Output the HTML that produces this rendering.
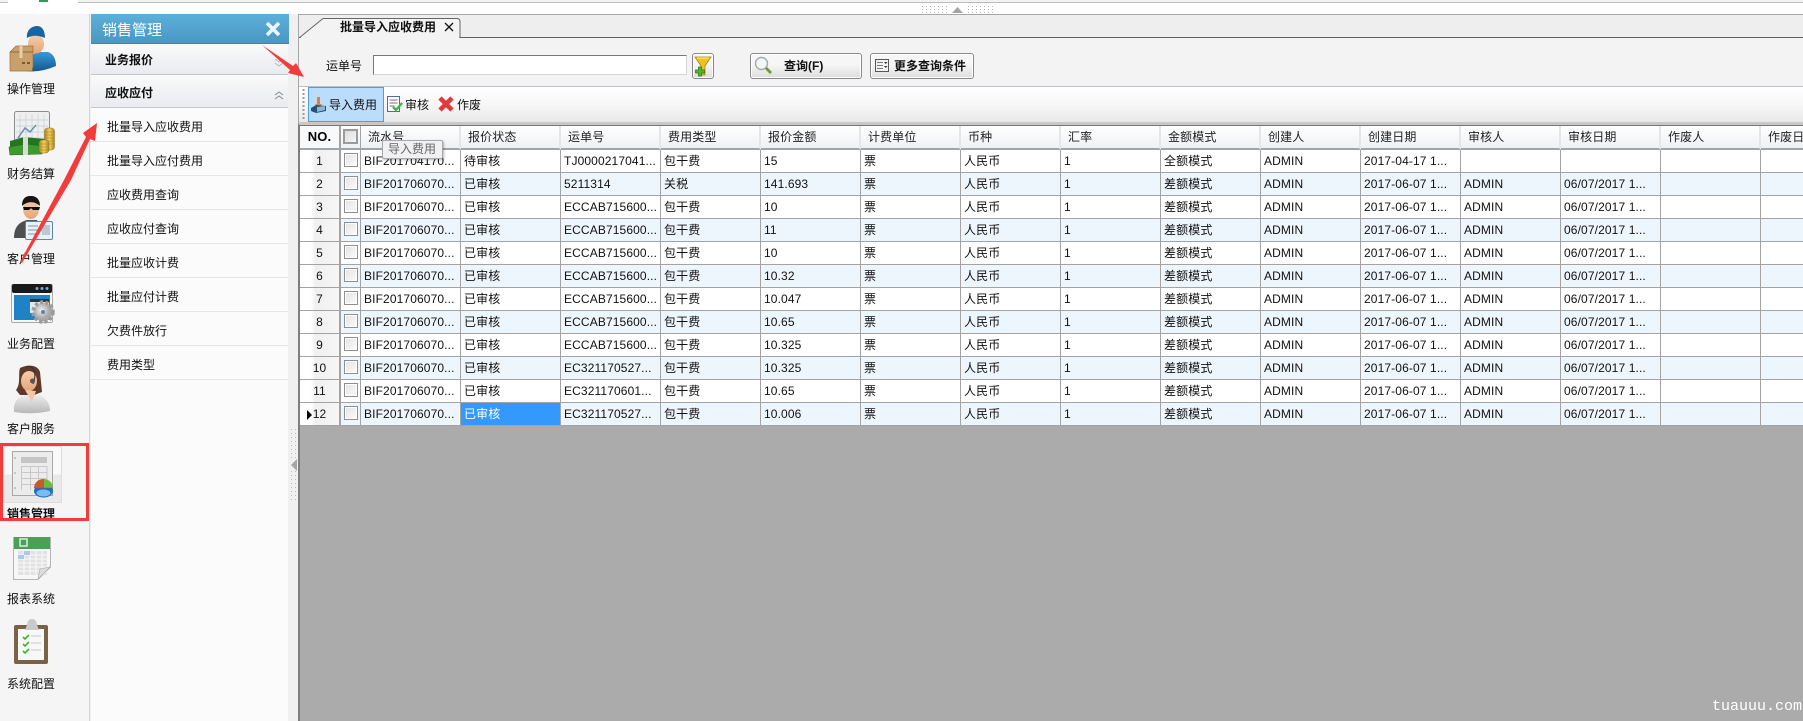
<!DOCTYPE html>
<html lang="zh-CN"><head><meta charset="utf-8"><title>销售管理</title>
<style>
*{box-sizing:border-box}
html,body{margin:0;padding:0;width:1803px;height:721px;overflow:hidden;background:#fff}
body{position:relative;font:12px/14px "Liberation Sans","Noto Sans CJK SC",sans-serif;color:#111}
.a{position:absolute;white-space:nowrap}
.lbl{position:absolute;left:7px;width:60px;line-height:16px;color:#111}
.mi{position:absolute;left:91px;width:197px;height:34px;border-bottom:1px solid #e6e6e6;padding:12px 0 0 16px;line-height:15px;background:#fbfbfb}
.acc{position:absolute;left:91px;width:197px;background:linear-gradient(#fafafa,#e9ebf0);border-bottom:1px solid #c3c7cf;font-weight:bold;padding-left:14px}
table{position:absolute;left:300px;top:126px;border-collapse:separate;border-spacing:0;table-layout:fixed;width:1561px;background:#fff}
td,th{height:23px;padding:0 0 0 3px;border-right:1px solid #a3a3a3;border-bottom:1px solid #a3a3a3;overflow:hidden;white-space:nowrap;font-weight:normal;text-align:left;font-size:12px;letter-spacing:.12px;color:#111}
th{height:24px;padding-left:7px;background:linear-gradient(#fff,#eef1f4);color:#222;border-bottom:2px solid #a3a3a3;border-right:2px solid #e4e6ea}
th:first-child{padding:0;text-align:center;font-weight:bold;font-size:13px;color:#000;background:#f8f9fa;border-right:2px solid #a3a3a3}
td:first-child{padding:0;text-align:center;background:linear-gradient(90deg,#fff 28%,#f0f0f0 40%,#f6f6f6 100%);border-right:2px solid #a3a3a3}
th:nth-child(2){padding:0;border-right:1px solid #a3a3a3}
td:nth-child(2){padding:0 0 0 3px;border-right:1px solid #a3a3a3}
tr:nth-child(even) td:not(:first-child){background:#eef6fd}
tr:nth-child(odd) td:not(:first-child){background:#fff}
.cb{display:block;width:14px;height:14px;margin-top:-2px;background:linear-gradient(135deg,#e3e3e3,#fbfbfb);border:1px solid #8f8f8f;box-shadow:inset 0 0 0 1px #fff}
.cbh{display:block;width:15px;height:15px;margin:-1px 0 0 2px;background:linear-gradient(135deg,#ddd,#f4f4f4);border:2px solid #9b9b9b}
td.sel{background:#3399ff!important;color:#fff}
.btn{position:absolute;top:53px;height:26px;border:1px solid #8a8a8a;border-radius:3px;background:linear-gradient(#f6f6f6 45%,#dcdcdc);box-shadow:inset 0 0 0 1px #fff}
.soft{filter:blur(.35px)}
</style></head><body>

<!-- top strip -->
<div class="a" style="left:0;top:0;width:1803px;height:3px;background:#f2f2f2;border-bottom:1px solid #bcbcbc"></div>
<div class="a" style="left:8px;top:0;width:70px;height:3px;background:#fff"></div>
<div class="a" style="left:39px;top:0;width:9px;height:2px;background:#2f9a55"></div>

<!-- icon column -->
<div class="a" style="left:0;top:14px;width:90px;height:707px;background:#f5f5f5;border-right:1px solid #d6d6d6"></div>
<div class="a" style="left:90px;top:14px;width:208px;height:707px;background:#f0f0f0"></div>
<div class="a" style="left:3px;top:446px;width:59px;height:57px;background:linear-gradient(#f9f9f9 50%,#e9e9e9 50%);border:1px solid #ddd"></div>

<svg class="a soft" style="left:0;top:0" width="90" height="721" viewBox="0 0 90 721">
<defs>
<linearGradient id="bl" x1="0" y1="0" x2="0" y2="1"><stop offset="0" stop-color="#3a9ad8"/><stop offset="1" stop-color="#14578f"/></linearGradient>
<linearGradient id="gd" x1="0" y1="0" x2="1" y2="0"><stop offset="0" stop-color="#a8852a"/><stop offset=".5" stop-color="#f4d35a"/><stop offset="1" stop-color="#a8852a"/></linearGradient>
<linearGradient id="sk" x1="0" y1="0" x2="0" y2="1"><stop offset="0" stop-color="#f7cdaa"/><stop offset="1" stop-color="#e5a67a"/></linearGradient>
<linearGradient id="wh" x1="0" y1="0" x2="0" y2="1"><stop offset="0" stop-color="#f0f0f0"/><stop offset="1" stop-color="#b8b8b8"/></linearGradient>
<radialGradient id="gr" cx=".4" cy=".4"><stop offset="0" stop-color="#f2f2f2"/><stop offset="1" stop-color="#a8a8a8"/></radialGradient>
</defs>
<!-- operator -->
<path d="M25 71 C26 58 32 54 38 52 L48 52 C54 54 56 60 56 66 Q40 73 25 71Z" fill="url(#bl)"/>
<ellipse cx="36" cy="44" rx="8" ry="9.500" fill="url(#sk)"/>
<path d="M27 38 C26 29 33 26 37 26 C43 26 45 32 45 38 C38 35 32 35 27 38Z" fill="#17669f"/>
<path d="M10 52 L16 46 L33 46 L33 66 L32 71 L10 71Z" fill="#c9a06a" stroke="#99713f" stroke-width=".7"/>
<path d="M10 52H33" stroke="#8f6a3a"/><path d="M21 46V58" stroke="#e6cfa8" stroke-width="3"/>
<path d="M22 63h3M27 63h3" stroke="#7a5a30" stroke-width="2"/>
<!-- finance -->
<rect x="14.500" y="111.500" width="35" height="38" rx="2" fill="#eef0f0" stroke="#8c8c8c"/>
<path d="M20 114v32M26 114v32M32 114v32M38 114v32M44 114v32M16 120h32M16 126h32M16 132h32M16 138h32" stroke="#c9cdcd" stroke-width=".7"/>
<path d="M18 138 L25 128 L30 132 L36 125" fill="none" stroke="#6c8bb5" stroke-width="1.500"/>
<path d="M10 141 L24 137 L45 139 L45 150 L28 155 L10 154Z" fill="#23761f"/>
<path d="M9 147 L26 144 L42 146 L42 154 L10 155Z" fill="#3c9a30" stroke="#1e6a1e" stroke-width=".6"/>
<rect x="23" y="137" width="5" height="18" fill="#d9d9d9"/>
<rect x="44.500" y="128" width="10" height="22" rx="3" fill="url(#gd)" stroke="#8e6e22" stroke-width=".5"/>
<path d="M45 132h9M45 135h9M45 138h9M45 141h9M45 144h9" stroke="#9b7a25" stroke-width=".6"/>
<rect x="39" y="140" width="10" height="13" rx="3" fill="url(#gd)" stroke="#8e6e22" stroke-width=".5"/>
<path d="M40 144h8M40 147h8M40 150h8" stroke="#9b7a25" stroke-width=".6"/>
<!-- customer -->
<path d="M14 238 C14 226 20 222 27 220 L37 220 L42 238Z" fill="#4d4f52"/>
<ellipse cx="31" cy="209" rx="8" ry="10" fill="url(#sk)"/>
<path d="M22 206 C22 197 27 196 31 196 C37 196 40 200 40 206 C35 201 27 201 22 206Z" fill="#151515"/>
<path d="M23 207h17l-1 3h-6l-1.500-1.500h-1l-1.500 1.500h-5z" fill="#0c0c0c"/>
<rect x="25.500" y="221.500" width="27" height="18" rx="1.500" fill="#e8f2f8" stroke="#5d86a5"/>
<path d="M28 226h10M28 230h14M28 234h8" stroke="#7a95a8"/><rect x="42" y="225" width="8" height="10" fill="#b9c8d2"/>
<!-- biz config -->
<rect x="11.500" y="284.500" width="41" height="38" rx="1.500" fill="#f7f7f7" stroke="#a9a9a9"/>
<rect x="12" y="284" width="40" height="9" rx="2" fill="#191919"/>
<circle cx="37" cy="288.500" r="1.500" fill="#7fa7c9"/><circle cx="42" cy="288.500" r="1.500" fill="#7fa7c9"/><circle cx="47" cy="288.500" r="1.500" fill="#7fa7c9"/>
<rect x="14" y="295" width="36" height="25" fill="#1f82c4"/>
<rect x="30" y="299" width="19" height="14" fill="#dfeaf2"/><rect x="30" y="299" width="19" height="3" fill="#333"/>
<circle cx="43" cy="312" r="9.500" fill="url(#gr)" stroke="#9b9b9b" stroke-width="4.500" stroke-dasharray="3 2.200"/>
<circle cx="43" cy="312" r="8" fill="url(#gr)"/><circle cx="43" cy="312" r="2" fill="#5a86ad"/>
<!-- service -->
<path d="M14 412 C13 399 20 397 27 394 L38 394 C46 398 50 403 50 411 Q32 415 14 412Z" fill="url(#wh)"/>
<path d="M20 368 C28 364 38 365 40 372 L42 392 L34 395 L20 395 L16 390 C21 384 18 374 20 368Z" fill="#5f3a2a"/>
<ellipse cx="29" cy="381" rx="8" ry="10" fill="url(#sk)"/>
<path d="M25 390 L36 391 L32 402Z" fill="#f4c7a3"/>
<path d="M26 367 C34 364 37 374 33 384" fill="none" stroke="#333" stroke-width="1"/>
<circle cx="32.500" cy="381" r="2.500" fill="#555"/>
<!-- sales -->
<rect x="12.500" y="451.500" width="40" height="44" fill="#ececec" stroke="#a8a8a8"/>
<rect x="21" y="457" width="26" height="6" fill="#c5c5c5"/>
<path d="M21.500 466v24M30.500 466v24M38.500 466v24M47 466v24M21 466.500h26M21 472.500h26M21 478.500h26M21 484.500h26" stroke="#c8c8c8" fill="none"/>
<circle cx="15" cy="458" r=".8" fill="#999"/><circle cx="15" cy="473" r=".8" fill="#999"/><circle cx="15" cy="488" r=".8" fill="#999"/>
<ellipse cx="43.500" cy="491" rx="9.500" ry="6.500" fill="#1c6fbe"/>
<ellipse cx="43.500" cy="493" rx="7" ry="3.500" fill="#79bdf0"/>
<path d="M34 488 A9.500 9 0 0 1 44 479 L44 488Z" fill="#c9582a"/>
<path d="M44 479 A9.500 9 0 0 1 53 488 L44 488Z" fill="#6cbb3c"/>
<path d="M34 488 H53" stroke="#b44" stroke-width=".6"/>
<!-- report -->
<path d="M13.500 537.500 H50.500 V567 L38 579.500 H13.500Z" fill="#f7f7f7" stroke="#b5b5b5"/>
<rect x="14" y="537" width="36" height="12" fill="#4c9f57"/>
<rect x="20" y="539" width="7" height="7" fill="none" stroke="#d7f0d9" stroke-width="1.500"/>
<rect x="18" y="551" width="29" height="24" fill="#e2e2e2"/>
<path d="M24 551v24M30 551v24M36 551v24M42 551v20M18 555h29M18 559h29M18 563h29M18 567h29M18 571h24" stroke="#fff" stroke-width=".8"/>
<rect x="24" y="551" width="6" height="4" fill="#a9c8ef"/><rect x="18" y="555" width="6" height="4" fill="#a9c8ef"/>
<path d="M38 579 L40 569 L50 567Z" fill="#ddd" stroke="#aaa" stroke-width=".6"/>
<!-- system -->
<rect x="14" y="625" width="34" height="39" rx="2" fill="#7a6245"/>
<rect x="18" y="629" width="26" height="31" fill="#f8f8f8"/>
<path d="M27 625 L28 621 Q32 617 36 621 L37 625 L39 630 L25 630Z" fill="#c9c9c9"/>
<path d="M23 637l2 2 4-4M23 644l2 2 4-4M23 651l2 2 4-4" stroke="#3cb52c" stroke-width="1.600" fill="none"/>
<path d="M31 636h10M31 643h10M31 650h10" stroke="#c8c8c8" stroke-width="1"/>
</svg>

<div class="lbl" style="top:81px">操作管理</div>
<div class="lbl" style="top:166px">财务结算</div>
<div class="lbl" style="top:251px">客户管理</div>
<div class="lbl" style="top:336px">业务配置</div>
<div class="lbl" style="top:421px">客户服务</div>
<div class="lbl" style="top:506px;font-weight:bold">销售管理</div>
<div class="lbl" style="top:591px">报表系统</div>
<div class="lbl" style="top:676px">系统配置</div>
<div class="a" style="left:0;top:443px;width:89px;height:78px;border:3px solid #f33b3b"></div>

<!-- side panel -->
<div class="a" style="left:91px;top:14px;width:198px;height:30px;background:linear-gradient(#5cb0d9,#4a97c4);border-bottom:1px solid #3d86b2"></div>
<div class="a" style="left:102px;top:22px;font-size:15px;line-height:18px;color:#fff">销售管理</div>
<svg class="a" style="left:265px;top:21px" width="16" height="16"><path d="M2 2 L14 14 M14 2 L2 14" stroke="#eef4f8" stroke-width="3.600"/></svg>
<div class="a" style="left:91px;top:44px;width:197px;height:677px;background:#fbfbfb"></div>
<div class="acc" style="top:44px;height:31px;line-height:33px">业务报价</div>
<div class="acc" style="top:75px;height:33px;line-height:36px">应收应付</div>
<svg class="a" style="left:272px;top:58px" width="14" height="10"><path d="M3 1l4 3 4-3M3 5l4 3 4-3" fill="none" stroke="#b5b5b5"/></svg>
<svg class="a" style="left:272px;top:90px" width="14" height="12"><path d="M3 5l4-3 4 3M3 9l4-3 4 3" fill="none" stroke="#8a8a8a"/></svg>
<div class="mi" style="top:108px">批量导入应收费用</div>
<div class="mi" style="top:142px">批量导入应付费用</div>
<div class="mi" style="top:176px">应收费用查询</div>
<div class="mi" style="top:210px">应收应付查询</div>
<div class="mi" style="top:244px">批量应收计费</div>
<div class="mi" style="top:278px">批量应付计费</div>
<div class="mi" style="top:312px">欠费件放行</div>
<div class="mi" style="top:346px">费用类型</div>

<!-- left splitter -->
<svg class="a" style="left:290px;top:428px" width="8" height="74">
<path d="M1.500 1v30M5.500 1v30M1.500 43v30M5.500 43v30" stroke="#bdbdbd" stroke-dasharray="1 3"/>
<path d="M7 31 L1 37 L7 43Z" fill="#a5a5a5"/></svg>
<div class="a" style="left:298px;top:14px;width:1px;height:110px;background:#a7a7a7"></div>
<div class="a" style="left:298px;top:124px;width:2px;height:597px;background:#7d7d7d"></div>

<!-- top splitter -->
<svg class="a" style="left:921px;top:5px" width="80" height="9">
<path d="M1 1.500h27M1 4.500h27M1 7.500h27M47 1.500h27M47 4.500h27M47 7.500h27" stroke="#b9b9b9" stroke-dasharray="1 3"/>
<path d="M31 8 L36.500 2 L42 8Z" fill="#a5a5a5"/></svg>

<!-- right pane -->
<div class="a" style="left:299px;top:14px;width:1504px;height:1px;background:#a7a7a7"></div>
<div class="a" style="left:299px;top:15px;width:1504px;height:23px;background:#eee;border-bottom:1px solid #5f5f5f"></div>
<svg class="a" style="left:299px;top:17px" width="172" height="22">
<path d="M0 21 L24 1.500 H158 Q161 1.500 161 5 V20.500 H161 L161 21 H0Z" fill="#f3f3f3" stroke="#666"/>
<rect x="2" y="20" width="158" height="2" fill="#f3f3f3"/>
<path d="M146 6l8 8M154 6l-8 8" stroke="#111" stroke-width="1.300"/></svg>
<div class="a" style="left:340px;top:20px;font-weight:bold;line-height:15px">批量导入应收费用</div>

<div class="a" style="left:299px;top:38px;width:1504px;height:49px;background:#f3f3f3;border-bottom:1px solid #bcc0c8"></div>
<div class="a" style="left:326px;top:59px;line-height:15px">运单号</div>
<div class="a" style="left:373px;top:55px;width:314px;height:20px;background:#fff;border:1px solid #d5d5d5;border-top:1px solid #777;border-left:1px solid #777"></div>

<div class="btn" style="left:692px;width:22px"></div>
<svg class="a soft" style="left:693px;top:55px" width="20" height="23">
<path d="M2 2 H18 L12 11 V20 H8 V11Z" fill="#f0c020" stroke="#a98512" stroke-width=".8"/>
<path d="M4 3H16" stroke="#fff3a8"/>
<path d="M2.500 15h3v-3h3v3h3v3h-3v3h-3v-3h-3z" fill="#4cba2a" stroke="#2a6e14" stroke-width=".7"/></svg>

<div class="btn" style="left:750px;width:112px"></div>
<svg class="a soft" style="left:754px;top:56px" width="20" height="20">
<circle cx="7.500" cy="7.500" r="6" fill="#f2f6f6" stroke="#a5aaaa" stroke-width="1.400"/>
<path d="M12 12l5 5" stroke="#6f9a3a" stroke-width="2.800"/></svg>
<div class="a" style="left:784px;top:59px;font-weight:bold;line-height:15px">查询(F)</div>

<div class="btn" style="left:870px;width:104px"></div>
<svg class="a" style="left:874px;top:58px" width="16" height="16">
<rect x="1.500" y="1.500" width="13" height="12" fill="#f3f3f3" stroke="#555"/>
<path d="M3 4.500h6M3 7.500h6M3 10.500h6" stroke="#777"/><path d="M10 4h3.500l-1.750 2zM10 8h3.500l-1.750 2z" fill="#333"/></svg>
<div class="a" style="left:894px;top:59px;font-weight:bold;line-height:15px">更多查询条件</div>

<!-- toolbar -->
<div class="a" style="left:299px;top:87px;width:1504px;height:35px;background:linear-gradient(#fff,#f7f7f7 50%,#e9e9e9)"></div>
<div class="a" style="left:299px;top:122px;width:1504px;height:3px;background:#c8c8c8"></div>
<svg class="a" style="left:302px;top:89px" width="4" height="30"><path d="M1.500 0v30" stroke="#9c9c9c" stroke-width="2" stroke-dasharray="2 2"/></svg>
<div class="a" style="left:308px;top:87px;width:76px;height:35px;background:#bbddfb;border:1px solid #4d9de0"></div>
<svg class="a soft" style="left:310px;top:96px" width="18" height="19">
<path d="M7 1h3v7h2l-3.500 4L5 8h2z" fill="#e0813a"/>
<path d="M1 12 L6 9 L16 10 L16 15 L6 17 L1 15Z" fill="#234f78"/><path d="M7 11l8-1v4l-8 2z" fill="#8cb6d4"/></svg>
<div class="a" style="left:329px;top:98px;line-height:15px">导入费用</div>
<svg class="a soft" style="left:385px;top:94px" width="18" height="20">
<rect x="2.500" y="2.500" width="12" height="15" fill="#fff" stroke="#4f6d94"/>
<path d="M4.500 6h8M4.500 9h8M4.500 12h5" stroke="#8a5f8e"/>
<path d="M8 13l3 3 6-7" fill="none" stroke="#3fb548" stroke-width="2.400"/></svg>
<div class="a" style="left:405px;top:98px;line-height:15px">审核</div>
<svg class="a soft" style="left:437px;top:95px" width="18" height="18">
<path d="M3 3l12 12M15 3L3 15" stroke="#e2393a" stroke-width="4.600"/></svg>
<div class="a" style="left:457px;top:98px;line-height:15px">作废</div>

<!-- grid background -->
<div class="a" style="left:300px;top:125px;width:1503px;height:596px;background:#ababab"></div>
<div class="a" style="left:299px;top:125px;width:1504px;height:1px;background:#777"></div>

<table>
<colgroup><col style="width:41px"><col style="width:20px"><col span="15" style="width:100px"></colgroup>
<thead><tr><th>NO.</th><th><span class="cbh"></span></th><th>流水号</th><th>报价状态</th><th>运单号</th><th>费用类型</th><th>报价金额</th><th>计费单位</th><th>币种</th><th>汇率</th><th>金额模式</th><th>创建人</th><th>创建日期</th><th>审核人</th><th>审核日期</th><th>作废人</th><th>作废日期</th></tr></thead>
<tbody>
<tr><td>1</td><td><span class="cb"></span></td><td>BIF201704170...</td><td>待审核</td><td>TJ0000217041...</td><td>包干费</td><td>15</td><td>票</td><td>人民币</td><td>1</td><td>全额模式</td><td>ADMIN</td><td>2017-04-17 1...</td><td></td><td></td><td></td><td></td></tr>
<tr><td>2</td><td><span class="cb"></span></td><td>BIF201706070...</td><td>已审核</td><td>5211314</td><td>关税</td><td>141.693</td><td>票</td><td>人民币</td><td>1</td><td>差额模式</td><td>ADMIN</td><td>2017-06-07 1...</td><td>ADMIN</td><td>06/07/2017 1...</td><td></td><td></td></tr>
<tr><td>3</td><td><span class="cb"></span></td><td>BIF201706070...</td><td>已审核</td><td>ECCAB715600...</td><td>包干费</td><td>10</td><td>票</td><td>人民币</td><td>1</td><td>差额模式</td><td>ADMIN</td><td>2017-06-07 1...</td><td>ADMIN</td><td>06/07/2017 1...</td><td></td><td></td></tr>
<tr><td>4</td><td><span class="cb"></span></td><td>BIF201706070...</td><td>已审核</td><td>ECCAB715600...</td><td>包干费</td><td>11</td><td>票</td><td>人民币</td><td>1</td><td>差额模式</td><td>ADMIN</td><td>2017-06-07 1...</td><td>ADMIN</td><td>06/07/2017 1...</td><td></td><td></td></tr>
<tr><td>5</td><td><span class="cb"></span></td><td>BIF201706070...</td><td>已审核</td><td>ECCAB715600...</td><td>包干费</td><td>10</td><td>票</td><td>人民币</td><td>1</td><td>差额模式</td><td>ADMIN</td><td>2017-06-07 1...</td><td>ADMIN</td><td>06/07/2017 1...</td><td></td><td></td></tr>
<tr><td>6</td><td><span class="cb"></span></td><td>BIF201706070...</td><td>已审核</td><td>ECCAB715600...</td><td>包干费</td><td>10.32</td><td>票</td><td>人民币</td><td>1</td><td>差额模式</td><td>ADMIN</td><td>2017-06-07 1...</td><td>ADMIN</td><td>06/07/2017 1...</td><td></td><td></td></tr>
<tr><td>7</td><td><span class="cb"></span></td><td>BIF201706070...</td><td>已审核</td><td>ECCAB715600...</td><td>包干费</td><td>10.047</td><td>票</td><td>人民币</td><td>1</td><td>差额模式</td><td>ADMIN</td><td>2017-06-07 1...</td><td>ADMIN</td><td>06/07/2017 1...</td><td></td><td></td></tr>
<tr><td>8</td><td><span class="cb"></span></td><td>BIF201706070...</td><td>已审核</td><td>ECCAB715600...</td><td>包干费</td><td>10.65</td><td>票</td><td>人民币</td><td>1</td><td>差额模式</td><td>ADMIN</td><td>2017-06-07 1...</td><td>ADMIN</td><td>06/07/2017 1...</td><td></td><td></td></tr>
<tr><td>9</td><td><span class="cb"></span></td><td>BIF201706070...</td><td>已审核</td><td>ECCAB715600...</td><td>包干费</td><td>10.325</td><td>票</td><td>人民币</td><td>1</td><td>差额模式</td><td>ADMIN</td><td>2017-06-07 1...</td><td>ADMIN</td><td>06/07/2017 1...</td><td></td><td></td></tr>
<tr><td>10</td><td><span class="cb"></span></td><td>BIF201706070...</td><td>已审核</td><td>EC321170527...</td><td>包干费</td><td>10.325</td><td>票</td><td>人民币</td><td>1</td><td>差额模式</td><td>ADMIN</td><td>2017-06-07 1...</td><td>ADMIN</td><td>06/07/2017 1...</td><td></td><td></td></tr>
<tr><td>11</td><td><span class="cb"></span></td><td>BIF201706070...</td><td>已审核</td><td>EC321170601...</td><td>包干费</td><td>10.65</td><td>票</td><td>人民币</td><td>1</td><td>差额模式</td><td>ADMIN</td><td>2017-06-07 1...</td><td>ADMIN</td><td>06/07/2017 1...</td><td></td><td></td></tr>
<tr><td>12</td><td><span class="cb"></span></td><td>BIF201706070...</td><td class="sel">已审核</td><td>EC321170527...</td><td>包干费</td><td>10.006</td><td>票</td><td>人民币</td><td>1</td><td>差额模式</td><td>ADMIN</td><td>2017-06-07 1...</td><td>ADMIN</td><td>06/07/2017 1...</td><td></td><td></td></tr>
</tbody></table>
<svg class="a" style="left:306px;top:409px" width="7" height="12"><path d="M1 1 L6 6 L1 11Z" fill="#000"/></svg>

<!-- tooltip -->
<div class="a" style="left:382px;top:140px;width:61px;height:19px;background:#f1f1f3;border:1px solid #a9a9a9;border-radius:2px;box-shadow:1px 1px 2px rgba(0,0,0,.3);color:#666;line-height:17px;padding-left:5px">导入费用</div>

<!-- watermark -->
<div class="a" style="left:1712px;top:699px;font:15px/16px 'Liberation Mono',monospace;color:#fff">tuauuu.com</div>

<!-- red arrows -->
<svg class="a" style="left:0;top:0" width="330" height="300">
<path d="M20 262 L64 180 L86 137 L83 133 L97 123 L95 141 L90 139 L71 180 L22 263Z" fill="#f33b3b"/>
<path d="M262 45 L293 66 L296 63 L304 77 L288 73 L290 70Z" fill="#f33b3b"/>
</svg>
</body></html>
